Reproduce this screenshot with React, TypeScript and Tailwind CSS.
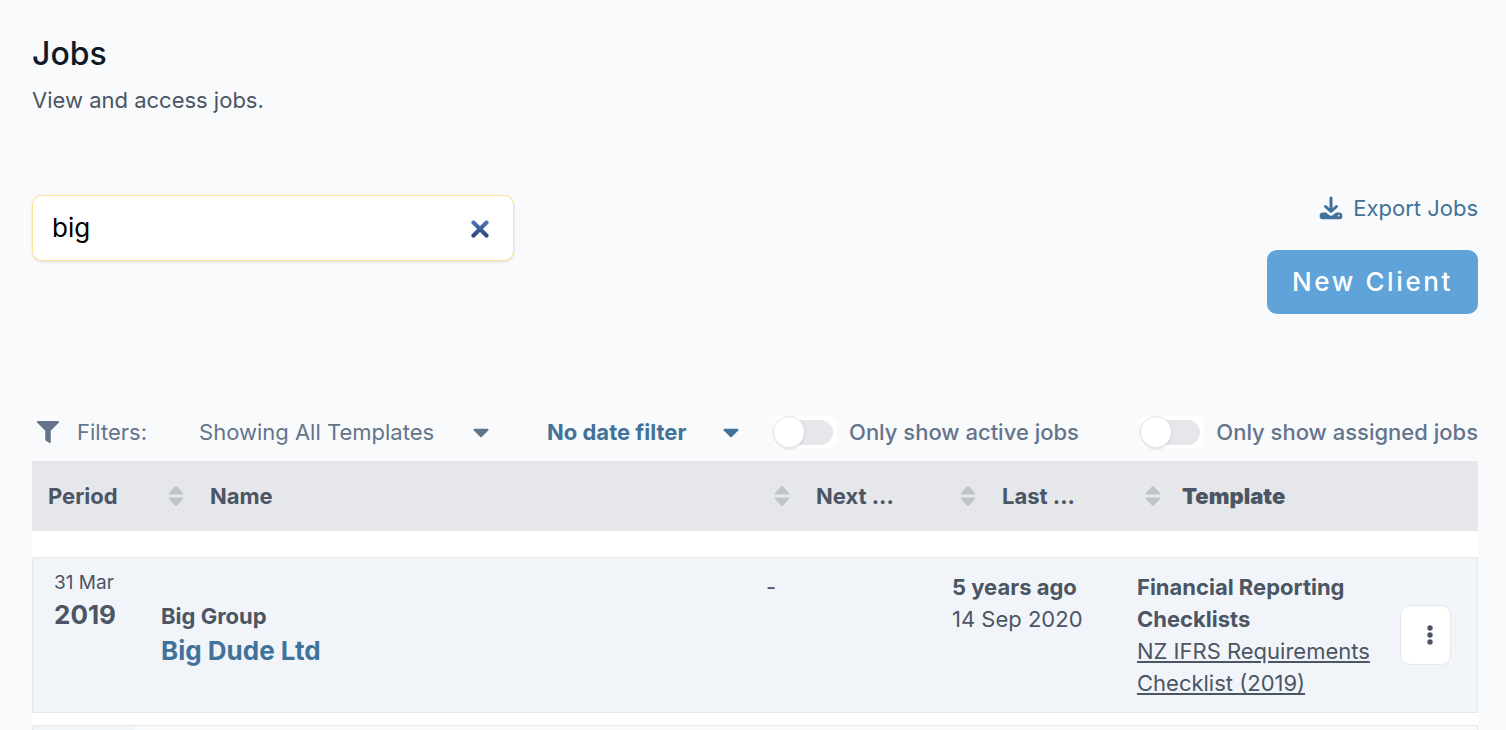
import { useState } from 'react';
import { FaCaretDown, FaFilter } from 'react-icons/fa';

type Job = {
  id: number;
  day: string;
  year: string;
  group: string;
  client: string;
  nextDue: string;
  lastAgo: string;
  lastDate: string;
  templateGroup: string;
  template: string;
};

const jobs: Job[] = [
  {
    id: 1,
    day: '31 Mar',
    year: '2019',
    group: 'Big Group',
    client: 'Big Dude Ltd',
    nextDue: '-',
    lastAgo: '5 years ago',
    lastDate: '14 Sep 2020',
    templateGroup: 'Financial Reporting Checklists',
    template: 'NZ IFRS Requirements Checklist (2019)',
  },
];

function SortIcon() {
  return (
    <svg width="16" height="20" viewBox="0 0 16 20" fill="#bfc4ca" className="shrink-0" aria-hidden="true">
      <path d="M7 .6a1.400 1.400 0 0 1 2 0l5.800 6.100c.7.8.3 1.900-.8 1.900H2C.9 8.600.5 7.500 1.200 6.700z" />
      <path d="M7 19.400a1.400 1.400 0 0 0 2 0l5.800-6.100c.7-.8.3-1.900-.8-1.900H2c-1.100 0-1.500 1.100-.8 1.900z" />
    </svg>
  );
}

function DownloadIcon() {
  return (
    <svg width="24" height="24" viewBox="0 0 24 24" fill="none" aria-hidden="true">
      <path d="M12 2v13M6.500 10.500 12 15.500l5.500-5" stroke="currentColor" strokeWidth="3" strokeLinecap="round" strokeLinejoin="round" />
      <path
        fill="currentColor"
        fillRule="evenodd"
        d="M4 16.500h3l2.800 2.200a3.400 3.400 0 0 0 4.400 0l2.800-2.200H20a3.400 3.400 0 0 1 0 6.800H4a3.400 3.400 0 0 1 0-6.800zm15.800 2.200a.9.9 0 1 0 0 1.800.9.9 0 0 0 0-1.800z"
      />
    </svg>
  );
}

function SearchBox() {
  const [value, setValue] = useState('big');

  return (
    <div className="flex h-[66px] w-[482px] items-center rounded-[10px] border border-[#fde495] bg-white pl-[19px] pr-[23px] shadow-sm">
      <input
        type="text"
        aria-label="Search jobs"
        value={value}
        onChange={(e) => setValue(e.target.value)}
        className="min-w-0 flex-1 bg-transparent text-[26px] text-black outline-none"
      />
      <button type="button" aria-label="Clear search" onClick={() => setValue('')}>
        <svg width="20" height="20" viewBox="0 0 20 20" fill="none">
          <defs>
            <linearGradient id="clear" x1="0" y1="0" x2="0" y2="20" gradientUnits="userSpaceOnUse">
              <stop stopColor="#5585cc" />
              <stop offset="1" stopColor="#2b3f74" />
            </linearGradient>
          </defs>
          <path d="M3.500 4.500l13 13M16.500 4.500l-13 13" stroke="url(#clear)" strokeWidth="4.200" strokeLinecap="round" />
        </svg>
      </button>
    </div>
  );
}

function FilterSelect({ label, option, className }: { label: string; option: string; className: string }) {
  return (
    <div className={`relative flex items-center ${className}`}>
      <select aria-label={label} className="w-full appearance-none bg-transparent outline-none">
        <option>{option}</option>
      </select>
      <FaCaretDown size={26} className="pointer-events-none absolute -right-1.5" />
    </div>
  );
}

function Toggle({ label }: { label: string }) {
  return (
    <label className="flex items-center gap-3 font-medium">
      <input type="checkbox" className="peer sr-only" />
      <span className="relative flex h-8 w-16 items-center rounded-lg bg-white px-1">
        <span className="h-[25px] w-full rounded-full bg-gray-200" />
        <span className="absolute left-0 top-0 size-8 rounded-full border border-gray-200 bg-white shadow" />
      </span>
      {label}
    </label>
  );
}

export default function App() {
  return (
    <div className="min-h-screen bg-[#f9fafc] pl-8 pr-7 pt-8 font-['Inter',sans-serif] text-[22px] leading-8 text-[#4b5563]">
      <h1 className="text-[32px] font-medium leading-[44px] text-[#111827]">Jobs</h1>
      <p className="mt-2">View and access jobs.</p>

      <div className="mt-[79px] flex items-start justify-between">
        <SearchBox />
        <div className="flex flex-col items-end">
          <a href="#export" className="-mt-[3px] flex items-center gap-2.5 text-[#41729a]">
            <DownloadIcon />
            Export Jobs
          </a>
          <button
            type="button"
            className="mt-[26px] h-16 rounded-[10px] bg-[#5fa3d9] px-[25px] text-[26px] font-medium tracking-widest text-white"
          >
            New Client
          </button>
        </div>
      </div>

      <div className="mt-[102px] flex items-center text-[#64748b]">
        <FaFilter size={22} className="ml-[5px]" />
        <span className="ml-[18px]">Filters:</span>
        <FilterSelect label="Template" option="Showing All Templates" className="ml-[52px] w-[289px]" />
        <FilterSelect label="Date" option="No date filter" className="ml-[59px] w-[191px] font-bold text-[#41729a]" />
        <div className="ml-[35px] flex flex-1 justify-between">
          <Toggle label="Only show active jobs" />
          <Toggle label="Only show assigned jobs" />
        </div>
      </div>

      <table className="mt-[13px] w-full table-fixed border-separate border-spacing-0 bg-white text-left">
        <colgroup>
          <col className="w-[103px]" />
          <col />
          <col className="w-[186px]" />
          <col className="w-[185px]" />
          <col className="w-[264px]" />
          <col className="w-[93px]" />
        </colgroup>
        <thead className="bg-gray-200">
          <tr className="h-[70px]">
            <th className="pl-4 font-bold">Period</th>
            <th className="pl-[33px] font-bold">
              <div className="flex items-center gap-[26px]"><SortIcon />Name</div>
            </th>
            <th className="pl-6 font-bold">
              <div className="flex items-center gap-[26px]"><SortIcon />Next ...</div>
            </th>
            <th className="pl-6 font-bold">
              <div className="flex items-center gap-[26px]"><SortIcon />Last ...</div>
            </th>
            <th colSpan={2} className="pl-6 font-black">
              <div className="flex items-center gap-[21px]"><SortIcon />Template</div>
            </th>
          </tr>
        </thead>
        <tbody>
          <tr className="h-[26px]" aria-hidden="true"><td colSpan={6} /></tr>
          {jobs.map((job) => (
            <tr key={job.id} className="bg-[#f1f5fa] align-top *:border-y *:border-gray-200">
              <td className="border-l pl-[21px] pt-3">
                <div className="text-[19px] leading-[26px]">{job.day}</div>
                <div className="text-[26px] font-bold leading-[38px]">{job.year}</div>
              </td>
              <td className="pl-[26px] pt-[42px]">
                <div className="font-bold">{job.group}</div>
                <a href="#client" className="text-[26px] font-bold leading-[38px] text-[#41729a]">{job.client}</a>
              </td>
              <td className="pl-4 pt-[13px]">{job.nextDue}</td>
              <td className="pl-4 pt-[13px]">
                <div className="font-bold">{job.lastAgo}</div>
                <div>{job.lastDate}</div>
              </td>
              <td className="pb-[13px] pl-4 pt-[13px]">
                <div className="font-bold">{job.templateGroup}</div>
                <a href="#template" className="block underline">{job.template}</a>
              </td>
              <td className="border-r pl-[15px] align-middle">
                <button
                  type="button"
                  aria-label="Job actions"
                  className="flex h-[60px] w-[51px] items-center justify-center rounded-[10px] border border-gray-200 bg-white pl-2.5"
                >
                  <svg width="6" height="20" viewBox="0 0 6 20" fill="currentColor">
                    <circle cx="3" cy="3" r="2.700" />
                    <circle cx="3" cy="10" r="2.700" />
                    <circle cx="3" cy="17" r="2.700" />
                  </svg>
                </button>
              </td>
            </tr>
          ))}
          <tr className="h-3" aria-hidden="true"><td colSpan={6} /></tr>
          <tr className="h-[5px] bg-[#f9fafc] *:border-t *:border-gray-200" aria-hidden="true">
            <td className="border-l bg-[#f1f5fa]" />
            <td colSpan={5} className="border-r" />
          </tr>
        </tbody>
      </table>
    </div>
  );
}
